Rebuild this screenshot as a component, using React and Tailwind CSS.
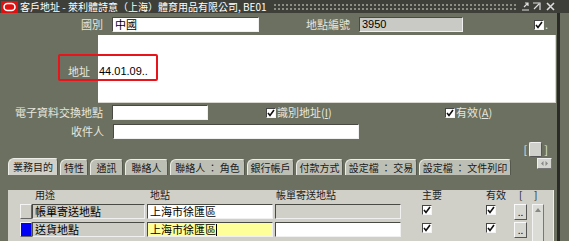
import React from "react";

const font = { fontFamily: '"Noto Sans CJK TC", "Noto Sans", sans-serif' };

function Check() {
  return (
    <span className="w-[10px] h-[10px] bg-white border border-t-[#444] border-l-[#444] border-b-[#f4f4f4] border-r-[#f4f4f4] flex items-center justify-center shrink-0">
      <svg width="8" height="8" viewBox="0 0 8 8">
        <path d="M1 4 L3 6.5 L7 1" stroke="#111" strokeWidth="1.6" fill="none" />
      </svg>
    </span>
  );
}

function Field({ w, bg = "bg-white", children, cls = "" }) {
  return (
    <div
      className={`h-[15px] ${w} ${bg} border border-t-[#4a4a44] border-l-[#4a4a44] border-b-[#f0f0f0] border-r-[#f0f0f0] flex items-center pl-[2px] text-[11px] leading-none text-black shrink-0 overflow-hidden ${cls}`}
    >
      {children}
    </div>
  );
}

function TitleBar() {
  return (
    <div className="h-[13px] bg-[#3e3f39] flex items-center">
      <svg width="17" height="12" viewBox="0 0 17 12" className="ml-[1px] shrink-0">
        <rect width="17" height="12" fill="#e01010" />
        <rect x="3" y="2.5" width="11" height="7" rx="3.5" fill="none" stroke="#fff" strokeWidth="1.6" />
      </svg>
      <span className="ml-[2px] text-[10px] leading-[12px] text-white whitespace-nowrap shrink-0">
        客戶地址 - 萊利體詩意（上海）體育用品有限公司, BE01
      </span>
      <div className="ml-[6px] flex-1 h-[8px] bg-[radial-gradient(circle,#8d8e84_0.8px,transparent_1px)] bg-[length:4px_4px]" />
      <div className="ml-[5px] mr-[13px] flex items-center gap-[2px] shrink-0">
        <svg width="9" height="9" viewBox="0 0 9 9">
          <path d="M1 8 H8 M3 5 L7 1 M4 1 H7 V4" stroke="#ddd" strokeWidth="1.2" fill="none" />
        </svg>
        <svg width="9" height="9" viewBox="0 0 9 9">
          <path d="M1 1 H8 V8 M2 7 L7 2" stroke="#ddd" strokeWidth="1.2" fill="none" />
        </svg>
        <svg width="11" height="9" viewBox="0 0 11 9" className="ml-[2px]">
          <path d="M2 1 L9 8 M9 1 L2 8" stroke="#ddd" strokeWidth="1.6" fill="none" />
        </svg>
      </div>
    </div>
  );
}

const tabs = [
  ["業務目的", "w-[50px]"],
  ["特性", "w-[28px]"],
  ["通訊", "w-[33px]"],
  ["聯絡人", "w-[43px]"],
  ["聯絡人 ： 角色", "w-[75px]"],
  ["銀行帳戶", "w-[47px]"],
  ["付款方式", "w-[47px]"],
  ["設定檔 ： 交易", "w-[72px]"],
  ["設定檔 ： 文件列印", "w-[92px]"],
];

export default function App() {
  return (
    <div className="w-[569px] h-[241px] overflow-hidden bg-[#6b7060] relative" style={font}>
      <TitleBar />
      <div className="flex">
        <div className="w-[557px] relative">
          {/* 國別 row */}
          <div className="flex items-center mt-[4px] h-[15px] text-[11px] text-[#e6e6de]">
            <span className="w-[103px] text-right leading-none">國別</span>
            <Field w="w-[147px] ml-[9px]">中國</Field>
            <span className="w-[91px] text-right leading-none">地點編號</span>
            <Field w="w-[104px] ml-[9px]" bg="bg-[#c9c9c6]">
              <span style={{ fontFamily: '"Liberation Sans", sans-serif' }}>3950</span>
            </Field>
            <span className="ml-[71px]">
              <Check />
            </span>
            <span className="ml-[1px] leading-none">.</span>
          </div>

          {/* 地址 */}
          <div className="flex mt-[3px] h-[68px]">
            <div className="w-[98px] flex items-start justify-end pr-[8px] pt-[31px] text-[11px] leading-none text-[#e6e6de]">
              地址
            </div>
            <div
              className="w-[458px] bg-white border-b border-r border-b-[#d8d8d0] border-r-[#d8d8d0] pt-[31px] pl-[1px] text-[11px] leading-none text-black"
              style={{ fontFamily: '"Liberation Sans", sans-serif' }}
            >
              44.01.09..
            </div>
          </div>
          <div className="absolute left-[58px] top-[41px] w-[100px] h-[27px] border-2 border-[#e8141b] rounded-[2px]" />

          {/* 電子資料交換地點 row */}
          <div className="flex items-center mt-[2px] h-[15px] text-[11px] text-[#e6e6de] leading-none">
            <span className="w-[103px] text-right">電子資料交換地點</span>
            <Field w="w-[96px] ml-[9px]" />
            <div className="ml-[58px] w-[179px] flex items-center gap-[1px]">
              <Check />
              <span>
                識別地址(<span className="underline">I</span>)
              </span>
            </div>
            <div className="flex items-center gap-[1px]">
              <Check />
              <span>
                有效(<span className="underline">A</span>)
              </span>
            </div>
          </div>

          {/* 收件人 row */}
          <div className="flex items-center mt-[4px] h-[15px] text-[11px] text-[#e6e6de] leading-none">
            <span className="w-[104px] text-right">收件人</span>
            <Field w="w-[246px] ml-[9px]" />
          </div>

          {/* bracket button */}
          <div className="flex justify-end items-center pr-[9px] mt-[3px] h-[15px] text-[11px] text-[#e6e6de] leading-none">
            <span>[</span>
            <span className="mx-[2px] w-[13px] h-[15px] bg-[#cfcfcb] border border-[#f0f0f0] border-b-[#555] border-r-[#555] rounded-[2px]" />
            <span>]</span>
          </div>

          {/* tabs */}
          <div className="flex items-end h-[17px] pl-[8px] gap-[2px] mt-[1px]">
            {tabs.map(([t, w], i) => (
              <div
                key={t}
                className={`${w} rounded-tl-[6px] rounded-tr-[3px] border-t border-l border-t-[#eeeee8] border-l-[#eeeee8] border-r border-r-[#55584c] flex items-center justify-center text-[10px] leading-none text-[#1a1a1a] whitespace-nowrap ${
                  i === 0 ? "bg-[#d0d0c9] h-[17px]" : "bg-[#bdbfb5] h-[16px]"
                }`}
              >
                {t}
              </div>
            ))}
            <div className="ml-[24px] mb-[6px] w-[15px] h-[11px] bg-[#d4d4d0] border border-[#f0f0f0] border-b-[#777] border-r-[#777] flex items-center justify-center">
              <svg width="9" height="7" viewBox="0 0 9 7">
                <path d="M3.5 1 L1 3.5 L3.5 6 Z M5.5 1 L8 3.5 L5.5 6 Z" fill="#888" />
              </svg>
            </div>
          </div>

          {/* panel */}
          <div className="ml-[8px] w-[546px] h-[80px] bg-[#d0d0c9] border-r border-r-[#f0f0ea] relative">
            <div className="flex h-[11px] mt-[15px] text-[10px] leading-none text-[#1a1a1a]">
              <span className="ml-[27px] w-[115px]">用途</span>
              <span className="w-[126px]">地點</span>
              <span className="w-[146px]">帳單寄送地點</span>
              <span className="w-[64px]">主要</span>
              <span className="w-[33px]">有效</span>
              <span className="w-[15px]">[</span>
              <span>]</span>
            </div>
            <div className="flex items-start mt-[3px]">
              <div className="ml-[12px] flex flex-col gap-[3px]">
                {[
                  ["帳單寄送地點", "bg-white", "bg-[#d0d0c9]", "bg-[#cfcfc7]"],
                  ["送貨地點", "bg-[#ffff99]", "bg-white", "bg-[#0000f5]"],
                ].map(([t, bg2, bg3, sq], i) => (
                  <div key={t} className="flex items-center h-[15px]">
                    <span className={`w-[12px] h-[15px] ${sq} border border-[#f4f4f4] border-b-[#666] border-r-[#666]`} />
                    <Field w="w-[113px]" bg="bg-[#cdcdc5]">{t}</Field>
                    <Field w="w-[126px] ml-[2px]" bg={bg2}>
                      上海市徐匯區
                      {i === 1 && <span className="w-[1px] h-[12px] bg-black" />}
                    </Field>
                    <Field w="w-[126px] ml-[2px]" bg={bg3} />
                    <span className="ml-[21px] mt-[-3px]">
                      <Check />
                    </span>
                    <span className="ml-[54px] mt-[-3px]">
                      <Check />
                    </span>
                    <span className="ml-[18px] w-[13px] h-[16px] bg-[#d8d8d2] border border-[#fafafa] border-b-[#555] border-r-[#555] flex items-end justify-center pb-[2px] text-[10px] leading-none text-black">
                      ..
                    </span>
                  </div>
                ))}
              </div>
              <div className="ml-[5px] w-[12px] h-[40px] bg-[#dcdcd6] border border-[#f4f4f4] border-b-[#777] border-r-[#777] flex justify-center pt-[2px]">
                <svg width="8" height="6" viewBox="0 0 8 6">
                  <path d="M4 1 L7 5 H1 Z" fill="#888" />
                </svg>
              </div>
            </div>
            <div className="absolute left-[-8px] top-[63px] w-[557px] h-[2px] bg-[#111]" />
          </div>
        </div>
        <div className="w-[3px] h-[240px] bg-[#2a2b26]" />
      </div>
    </div>
  );
}
